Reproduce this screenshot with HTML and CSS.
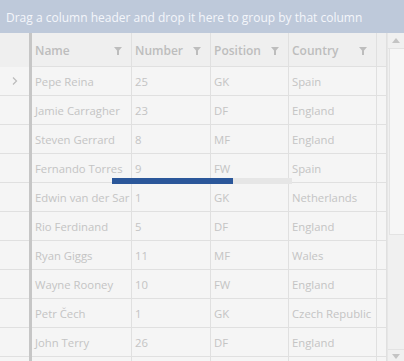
FILE: index.html
```html
<!DOCTYPE html>
<html>
<head>
  <title>Players Grid</title>
  <link rel="stylesheet" href="styles.css">
</head>
<body>
  <div class="group-panel">Drag a column header and drop it here to group by that column</div>

  <div class="grid">
    <div class="grid-body">
      <div class="row header">
        <div class="cell indicator"></div>
        <div class="splitter"></div>
        <div class="cell">Name<svg class="funnel" viewBox="0 0 8 8"><path d="M0 0H8L5 3.5V8H3V3.5Z"/></svg></div>
        <div class="cell">Number<svg class="funnel" viewBox="0 0 8 8"><path d="M0 0H8L5 3.5V8H3V3.5Z"/></svg></div>
        <div class="cell">Position<svg class="funnel" viewBox="0 0 8 8"><path d="M0 0H8L5 3.5V8H3V3.5Z"/></svg></div>
        <div class="cell">Country<svg class="funnel" viewBox="0 0 8 8"><path d="M0 0H8L5 3.5V8H3V3.5Z"/></svg></div>
        <div class="cell filler"></div>
      </div>
      <div id="rows"></div>
    </div>

    <div class="scrollbar">
      <div class="scroll-btn"><span class="arrow up"></span></div>
      <div class="thumb"></div>
      <div class="track"></div>
      <div class="scroll-btn down"><span class="arrow down"></span></div>
    </div>

    <div class="loading">
      <div class="loading-fill"></div>
    </div>
  </div>

  <script>
    // Player data
    const players = [
      ["Pepe Reina", 25, "GK", "Spain"],
      ["Jamie Carragher", 23, "DF", "England"],
      ["Steven Gerrard", 8, "MF", "England"],
      ["Fernando Torres", 9, "FW", "Spain"],
      ["Edwin van der Sar", 1, "GK", "Netherlands"],
      ["Rio Ferdinand", 5, "DF", "England"],
      ["Ryan Giggs", 11, "MF", "Wales"],
      ["Wayne Rooney", 10, "FW", "England"],
      ["Petr Čech", 1, "GK", "Czech Republic"],
      ["John Terry", 26, "DF", "England"],
      ["", "", "", ""]
    ];

    const rowsEl = document.getElementById("rows");

    players.forEach(function (p, i) {
      const row = document.createElement("div");
      row.className = "row";

      const indicator = document.createElement("div");
      indicator.className = "cell indicator";
      if (i === 0) {
        indicator.innerHTML = '<svg class="expand" viewBox="0 0 6 8"><path d="M1 0.5L4.5 4L1 7.5"/></svg>';
      }
      row.appendChild(indicator);

      const splitter = document.createElement("div");
      splitter.className = "splitter";
      row.appendChild(splitter);

      p.forEach(function (value) {
        const cell = document.createElement("div");
        cell.className = "cell";
        cell.textContent = value;
        row.appendChild(cell);
      });

      const filler = document.createElement("div");
      filler.className = "cell filler";
      row.appendChild(filler);

      rowsEl.appendChild(row);
    });
  </script>
</body>
</html>
```

FILE: styles.css
```css
body {
  margin: 0;
  width: 404px;
  height: 361px;
  overflow: hidden;
  font-family: 'Segoe UI', 'Open Sans', sans-serif;
  font-size: 12px;
  background: #f5f5f5;
}

.group-panel {
  height: 33px;
  line-height: 36px;
  padding-left: 6px;
  background-color: #bec9da;
  color: #f4f6fa;
  white-space: nowrap;
}

.grid {
  display: flex;
  position: relative;
  height: 328px;
  overflow: hidden;
}

.grid-body {
  width: 387px;
}

.row {
  display: grid;
  grid-template-columns: 29px 3px 100px 79px 78px 88px 10px;
  height: 29px;
  color: #c4c4c4;
  font-size: 11.3px;
}

.row.header {
  height: 34px;
  background-color: #efefef;
  color: #bdbdbd;
  font-size: 12px;
  font-weight: 600;
}

.cell {
  box-sizing: border-box;
  display: flex;
  align-items: center;
  padding-left: 3px;
  border-right: 1px solid #e0e0e0;
  border-bottom: 1px solid #e0e0e0;
  white-space: nowrap;
  overflow: hidden;
}

.header .cell {
  padding-top: 2px;
  padding-right: 9px;
}

.cell.indicator {
  border-right: none;
  justify-content: center;
  padding-left: 0;
}

.header .cell.indicator {
  border-bottom: none;
}

.cell.filler {
  padding: 0;
}

.splitter {
  background-color: #c6c6c6;
}

.funnel {
  width: 8px;
  height: 8px;
  margin-left: auto;
  fill: #bdbdbd;
}

.expand {
  width: 6px;
  height: 8px;
  fill: none;
  stroke: #bbbbbb;
  stroke-width: 1.2;
}

.scrollbar {
  width: 17px;
  display: flex;
  flex-direction: column;
  background-color: #f0f0f0;
  border-left: 1px solid #e6e6e6;
  box-sizing: border-box;
}

.scroll-btn {
  height: 16px;
  display: flex;
  align-items: center;
  justify-content: center;
  border-bottom: 1px solid #e3e3e3;
  box-sizing: border-box;
}

.scroll-btn.down {
  height: 12px;
  border-bottom: none;
  border-top: 1px solid #e3e3e3;
  align-items: flex-start;
  padding-top: 4px;
}

.thumb {
  height: 186px;
  margin-left: 1px;
  background-color: #f6f6f6;
  border-left: 1px solid #e3e3e3;
  border-bottom: 1px solid #e3e3e3;
  box-sizing: border-box;
}

.track {
  flex: 1;
}

.arrow {
  width: 0;
  height: 0;
  border-left: 4px solid transparent;
  border-right: 4px solid transparent;
}

.arrow.up {
  border-bottom: 5px solid #c4c4c4;
}

.arrow.down {
  border-top: 5px solid #c4c4c4;
}

/* Loading indicator over the grid */
.loading {
  position: absolute;
  left: 112px;
  top: 145px;
  width: 180px;
  height: 6px;
  background-color: #e6e6e6;
}

.loading-fill {
  width: 121px;
  height: 100%;
  background-color: #2b579a;
}
```
